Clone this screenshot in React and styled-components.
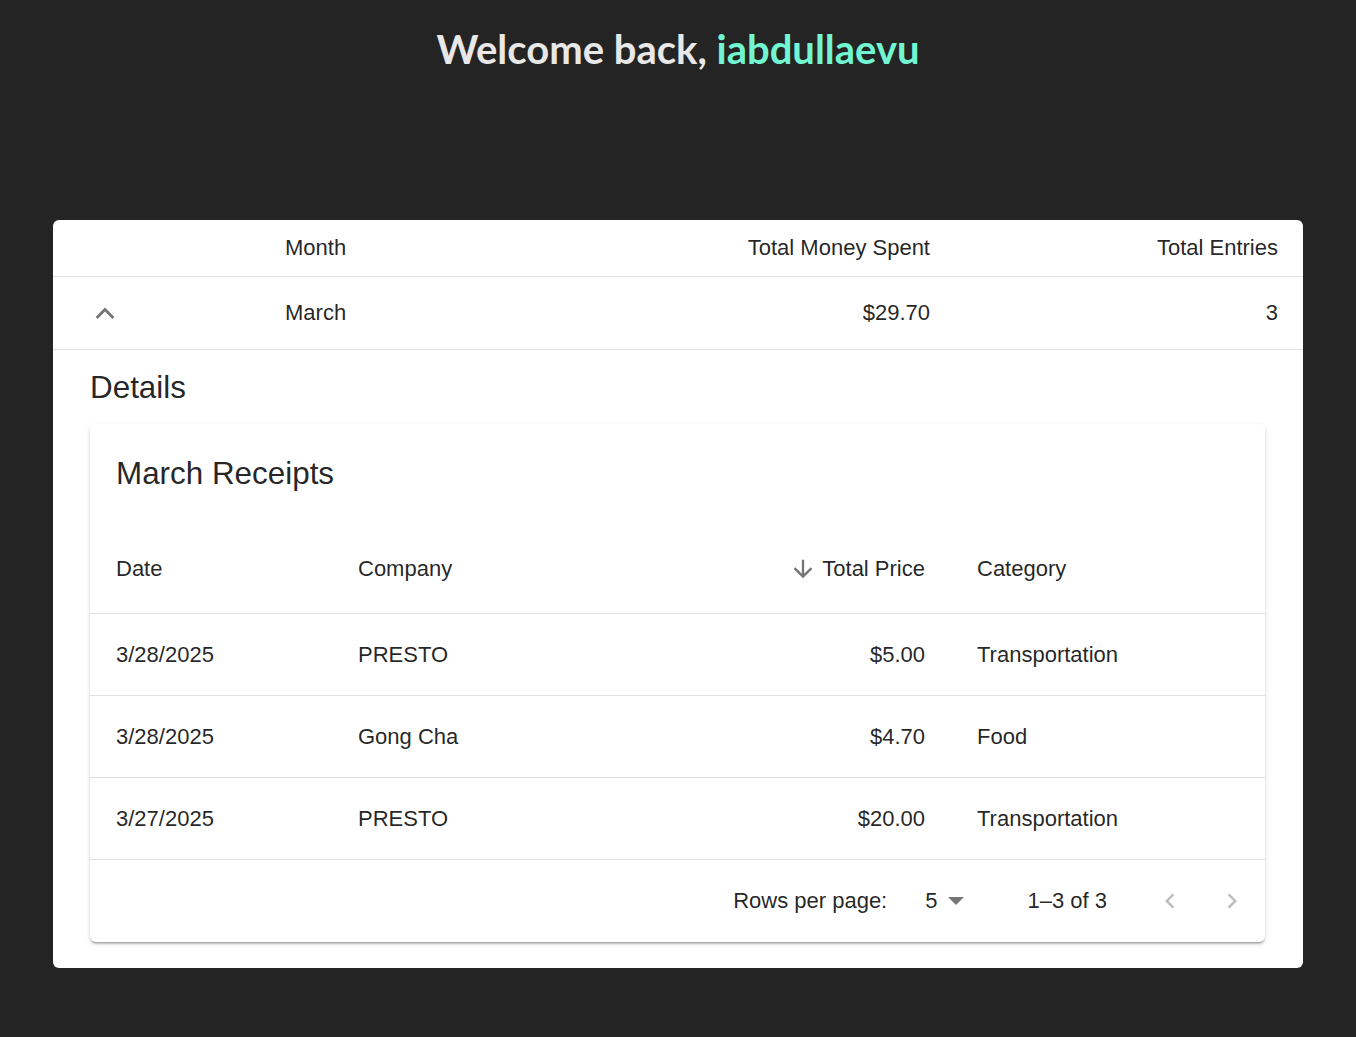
import React from 'react';
import styled, { createGlobalStyle } from 'styled-components';

const GlobalStyle = createGlobalStyle`
  html, body {
    margin: 0;
    padding: 0;
    background: #242424;
  }
  body {
    font-family: "Liberation Sans", Arial, sans-serif;
    color: rgba(0, 0, 0, 0.87);
  }
`;

const Page = styled.div`
  min-height: 1037px;
  padding: 0 53px;
  box-sizing: border-box;
`;

const Heading = styled.h1`
  margin: 0;
  padding-top: 22px;
  height: 220px;
  box-sizing: border-box;
  text-align: center;
  font-family: "Lato", "Open Sans", sans-serif;
  font-weight: 700;
  font-size: 40px;
  line-height: 54px;
  color: #e8e8e8;

  span {
    color: #72f6d2;
  }
`;

const Card = styled.div`
  background: #fff;
  border-radius: 6px;
  overflow: hidden;
`;

const MainRow = styled.div`
  display: grid;
  grid-template-columns: 207px 1fr 1fr 348px;
  align-items: center;
  height: ${p => p.$height}px;
  border-bottom: 1px solid #e0e0e0;
  font-size: 22px;
`;

const Cell = styled.div`
  padding: 0 25px;
  text-align: ${p => (p.$right ? 'right' : 'left')};
  white-space: nowrap;
`;

const ToggleCell = styled.div`
  display: flex;
  align-items: center;
  padding: 0 0 3px 40px;
  color: #757575;
`;

const Details = styled.div`
  padding: 13px 38px 26px 37px;
`;

const Title = styled.h6`
  margin: 0 0 11px;
  font-size: 31.4px;
  font-weight: 400;
  line-height: 50px;
`;

const InnerCard = styled.div`
  background: #fff;
  border-radius: 6px;
  box-shadow: 0 3px 2px -2px rgba(0, 0, 0, 0.2), 0 2px 2px 0 rgba(0, 0, 0, 0.14),
    0 2px 5px 0 rgba(0, 0, 0, 0.12);
  overflow: hidden;
`;

const Toolbar = styled.div`
  display: flex;
  align-items: center;
  height: 108px;
  box-sizing: border-box;
  padding: 0 0 9px 26px;
  font-size: 31.4px;
`;

const ReceiptRow = styled.div`
  display: grid;
  grid-template-columns: 242px 1fr 1fr 314px;
  align-items: center;
  height: 82px;
  box-sizing: border-box;
  padding-bottom: ${p => (p.$head ? 8 : 0)}px;
  border-bottom: 1px solid #e0e0e0;
  font-size: 22px;
`;

const ReceiptCell = styled.div`
  padding: 0 26px;
  display: flex;
  align-items: center;
  justify-content: ${p => (p.$right ? 'flex-end' : 'flex-start')};
  white-space: nowrap;
`;

const SortIcon = styled.svg`
  width: 28px;
  height: 28px;
  margin-right: 5px;
  color: #757575;
`;

const Pagination = styled.div`
  display: flex;
  align-items: center;
  justify-content: flex-end;
  height: 82px;
  padding-right: 11px;
  font-size: 22px;
`;

const RowsLabel = styled.span`
  margin-right: 38px;
`;

const RowsSelect = styled.div`
  display: flex;
  align-items: center;
  gap: 10px;
  margin-right: 62px;
`;

const Range = styled.span`
  margin-right: 41px;
`;

const PageButton = styled.button`
  display: flex;
  align-items: center;
  justify-content: center;
  width: 44px;
  height: 44px;
  margin-left: ${p => p.$gap || 0}px;
  padding: 0;
  border: 0;
  background: none;
  color: rgba(0, 0, 0, 0.26);
`;

const ChevronUp = () => (
  <svg width="24" height="24" viewBox="0 0 24 24" fill="currentColor">
    <path d="M12 7.5 2.6 16.9l2 2L12 11.5l7.4 7.4 2-2z" />
  </svg>
);

const receipts = [
  { date: '3/28/2025', company: 'PRESTO', price: '$5.00', category: 'Transportation' },
  { date: '3/28/2025', company: 'Gong Cha', price: '$4.70', category: 'Food' },
  { date: '3/27/2025', company: 'PRESTO', price: '$20.00', category: 'Transportation' },
];

export default function App() {
  return (
    <Page>
      <GlobalStyle />
      <Heading>
        Welcome back, <span>iabdullaevu</span>
      </Heading>
      <Card>
        <MainRow $height={56}>
          <Cell />
          <Cell>Month</Cell>
          <Cell $right>Total Money Spent</Cell>
          <Cell $right>Total Entries</Cell>
        </MainRow>
        <MainRow $height={72}>
          <ToggleCell>
            <ChevronUp />
          </ToggleCell>
          <Cell>March</Cell>
          <Cell $right>$29.70</Cell>
          <Cell $right>3</Cell>
        </MainRow>
        <Details>
          <Title>Details</Title>
          <InnerCard>
            <Toolbar>March Receipts</Toolbar>
            <ReceiptRow $head>
              <ReceiptCell>Date</ReceiptCell>
              <ReceiptCell>Company</ReceiptCell>
              <ReceiptCell $right>
                <SortIcon viewBox="0 0 24 24" fill="currentColor">
                  <path d="m20 12-1.41-1.41L13 16.17V4h-2v12.17l-5.58-5.59L4 12l8 8 8-8z" />
                </SortIcon>
                Total Price
              </ReceiptCell>
              <ReceiptCell>Category</ReceiptCell>
            </ReceiptRow>
            {receipts.map((r, i) => (
              <ReceiptRow key={i}>
                <ReceiptCell>{r.date}</ReceiptCell>
                <ReceiptCell>{r.company}</ReceiptCell>
                <ReceiptCell $right>{r.price}</ReceiptCell>
                <ReceiptCell>{r.category}</ReceiptCell>
              </ReceiptRow>
            ))}
            <Pagination>
              <RowsLabel>Rows per page:</RowsLabel>
              <RowsSelect>
                5
                <svg width="18" height="10" viewBox="0 0 18 10">
                  <path d="M1 1h16L9 9z" fill="#757575" />
                </svg>
              </RowsSelect>
              <Range>1–3 of 3</Range>
              <PageButton>
                <svg width="30" height="30" viewBox="0 0 24 24" fill="currentColor">
                  <path d="M15.41 7.41 14 6l-6 6 6 6 1.41-1.41L10.83 12z" />
                </svg>
              </PageButton>
              <PageButton $gap={18}>
                <svg width="30" height="30" viewBox="0 0 24 24" fill="currentColor">
                  <path d="M10 6 8.59 7.41 13.17 12l-4.58 4.59L10 18l6-6z" />
                </svg>
              </PageButton>
            </Pagination>
          </InnerCard>
        </Details>
      </Card>
    </Page>
  );
}
